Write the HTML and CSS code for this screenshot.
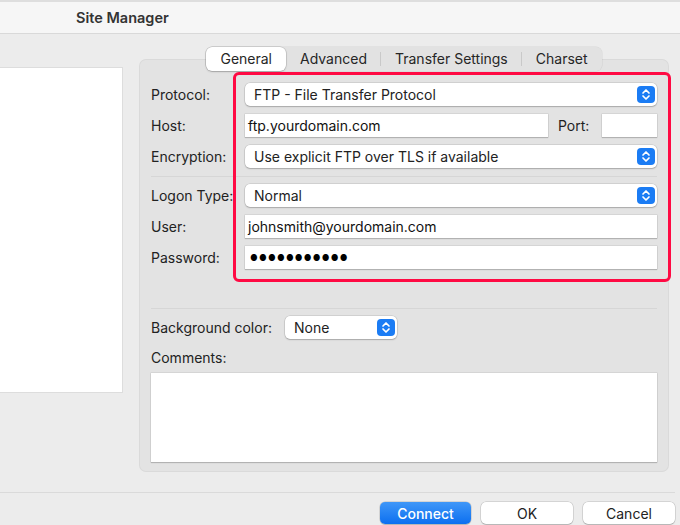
FILE: index.html
```html
<!DOCTYPE html>
<html lang="en">
<head>
<meta charset="utf-8">
<title>Site Manager</title>
<link rel="stylesheet" href="styles.css">
</head>
<body>
<div class="window">
  <header class="titlebar"><span class="title">Site Manager</span></header>
  <div class="content">
    <div class="site-list"></div>
    <section class="panel-area">
      <nav class="tabs">
        <span class="tab active">General</span>
        <span class="tab">Advanced</span>
        <span class="divider"></span>
        <span class="tab">Transfer Settings</span>
        <span class="divider"></span>
        <span class="tab">Charset</span>
      </nav>
      <div class="panel">
        <div class="highlight"></div>
        <div class="row">
          <span class="label">Protocol:</span>
          <div class="select grow"><span>FTP - File Transfer Protocol</span>
            <svg class="stepper" viewBox="0 0 18 17" width="18" height="17"><rect width="18" height="17" rx="4" fill="#1b7cf4"/><path d="M6 7 L9 4 L12 7 M6 10 L9 13 L12 10" fill="none" stroke="#fff" stroke-width="1.7" stroke-linecap="round" stroke-linejoin="round"/></svg>
          </div>
        </div>
        <div class="row">
          <span class="label">Host:</span>
          <div class="input grow">ftp.yourdomain.com</div>
          <span class="port-label">Port:</span>
          <div class="input port"></div>
        </div>
        <div class="row">
          <span class="label">Encryption:</span>
          <div class="select grow"><span>Use explicit FTP over TLS if available</span>
            <svg class="stepper" viewBox="0 0 18 17" width="18" height="17"><rect width="18" height="17" rx="4" fill="#1b7cf4"/><path d="M6 7 L9 4 L12 7 M6 10 L9 13 L12 10" fill="none" stroke="#fff" stroke-width="1.7" stroke-linecap="round" stroke-linejoin="round"/></svg>
          </div>
        </div>
        <hr class="sep">
        <div class="row">
          <span class="label">Logon Type:</span>
          <div class="select grow"><span>Normal</span>
            <svg class="stepper" viewBox="0 0 18 17" width="18" height="17"><rect width="18" height="17" rx="4" fill="#1b7cf4"/><path d="M6 7 L9 4 L12 7 M6 10 L9 13 L12 10" fill="none" stroke="#fff" stroke-width="1.7" stroke-linecap="round" stroke-linejoin="round"/></svg>
          </div>
        </div>
        <div class="row">
          <span class="label">User:</span>
          <div class="input grow">johnsmith@yourdomain.com</div>
        </div>
        <div class="row">
          <span class="label">Password:</span>
          <div class="input grow password">●●●●●●●●●●●</div>
        </div>
        <hr class="sep lower">
        <div class="row bg-row">
          <span class="label-auto">Background color:</span>
          <div class="select small"><span>None</span>
            <svg class="stepper" viewBox="0 0 18 17" width="18" height="17"><rect width="18" height="17" rx="4" fill="#1b7cf4"/><path d="M6 7 L9 4 L12 7 M6 10 L9 13 L12 10" fill="none" stroke="#fff" stroke-width="1.7" stroke-linecap="round" stroke-linejoin="round"/></svg>
          </div>
        </div>
        <div class="comments-label">Comments:</div>
        <div class="comments"></div>
      </div>
    </section>
  </div>
  <footer class="footer">
    <button class="btn primary">Connect</button>
    <button class="btn">OK</button>
    <button class="btn">Cancel</button>
  </footer>
</div>
</body>
</html>
```

FILE: styles.css
```css
* { box-sizing: border-box; }

html, body {
  margin: 0;
  padding: 0;
}

body {
  width: 680px;
  height: 525px;
  overflow: hidden;
  background: #ececec;
  font-family: Inter, "Noto Sans", "Liberation Sans", sans-serif;
  font-size: 14px;
  color: #1f1f1f;
}

.window {
  width: 680px;
  height: 525px;
  display: flex;
  flex-direction: column;
}

.titlebar {
  height: 34px;
  flex: none;
  background: #f6f6f6;
  border-top: 2px solid #dedede;
  border-bottom: 1px solid #d9d9d9;
  padding-left: 76px;
  display: flex;
  align-items: center;
}

.title {
  font-weight: 600;
  font-size: 14.5px;
  color: #333;
}

.content {
  height: 458px;
  flex: none;
  display: flex;
  gap: 17px;
}

.site-list {
  margin-top: 34px;
  width: 122px;
  height: 324px;
  background: #fff;
  box-shadow: 0 0 0 1px #dddddd;
}

.panel-area {
  width: 530px;
  padding-top: 13px;
  display: flex;
  flex-direction: column;
  align-items: center;
}

.tabs {
  position: relative;
  z-index: 2;
  display: flex;
  align-items: center;
  height: 24px;
  margin-bottom: -12px;
  background: #e2e2e2;
  border-radius: 6px;
  box-shadow: 0 0 0 0.5px rgba(0,0,0,0.08);
}

.tab {
  height: 24px;
  line-height: 24px;
  padding: 0 14px;
  color: #262626;
  font-size: 14px;
}

.tab.active {
  background: #fff;
  border-radius: 6px;
  box-shadow: 0 0 0 0.5px rgba(0,0,0,0.18), 0 1px 2px rgba(0,0,0,0.18);
}

.divider {
  width: 1px;
  height: 14px;
  background: #c9c9c9;
  margin: 0 -0.5px;
}

.panel {
  position: relative;
  width: 530px;
  height: 413px;
  background: #e3e3e3;
  border-radius: 7px;
  box-shadow: inset 0 0 0 1px rgba(0,0,0,0.04);
  padding: 24px 12px 10px 12px;
  display: flex;
  flex-direction: column;
}

.highlight {
  position: absolute;
  left: 94px;
  top: 13px;
  width: 438px;
  height: 210px;
  border: 3px solid #ff0a43;
  border-radius: 6px;
  z-index: 3;
  pointer-events: none;
}

.row {
  display: flex;
  align-items: center;
  height: 23px;
  margin-bottom: 8px;
}

.label {
  width: 94px;
  flex: none;
  white-space: nowrap;
  color: #222;
}

.label-auto {
  flex: none;
  width: 134px;
  color: #222;
}

.grow { flex: 1; }

.select {
  height: 23px;
  background: #fff;
  border-radius: 5px;
  box-shadow: 0 0 0 0.5px rgba(0,0,0,0.16), 0 1px 1.5px rgba(0,0,0,0.2);
  display: flex;
  align-items: center;
  justify-content: space-between;
  padding: 0 2px 0 9px;
  color: #222;
}

.select.small {
  width: 112px;
}

.stepper {
  display: block;
  flex: none;
}

.input {
  height: 23px;
  background: #fff;
  box-shadow: 0 0 0 0.5px rgba(0,0,0,0.12), 0 1px 1px rgba(0,0,0,0.16);
  display: flex;
  align-items: center;
  padding-left: 3px;
  color: #111;
}

.port-label {
  flex: none;
  margin: 0 0 0 10px;
  width: 44px;
}

.input.port {
  flex: none;
  width: 55px;
}

.password {
  font-size: 8.5px;
  letter-spacing: 1.2px;
  padding-left: 5px;
  color: #000;
}

.sep {
  border: none;
  height: 1px;
  background: #d6d6d6;
  margin: 0 0 7px 0;
  flex: none;
}

.sep.lower {
  margin-top: 31px;
}

.bg-row {
  margin-bottom: 0;
}

.comments-label {
  margin-top: 9px;
  height: 20px;
  line-height: 20px;
  color: #222;
}

.comments {
  margin-top: 5px;
  height: 89px;
  background: #fff;
  box-shadow: 0 0 0 0.5px rgba(0,0,0,0.12), 0 1px 1px rgba(0,0,0,0.16);
}

.footer {
  flex: 1;
  border-top: 1px solid #dadada;
  margin-right: 5px;
  display: flex;
  justify-content: flex-end;
  align-items: flex-start;
  gap: 10px;
  padding-top: 9px;
}

.btn {
  width: 92px;
  height: 22px;
  border: none;
  border-radius: 5px;
  background: #fff;
  font-family: Inter, "Noto Sans", "Liberation Sans", sans-serif;
  font-size: 14px;
  color: #222;
  box-shadow: 0 0 0 0.5px rgba(0,0,0,0.2), 0 1px 1px rgba(0,0,0,0.15);
  padding: 0;
}

.btn.primary {
  width: 91px;
  background: linear-gradient(#3f97f8, #0c6ff0);
  color: #fff;
  font-weight: 500;
}
```
